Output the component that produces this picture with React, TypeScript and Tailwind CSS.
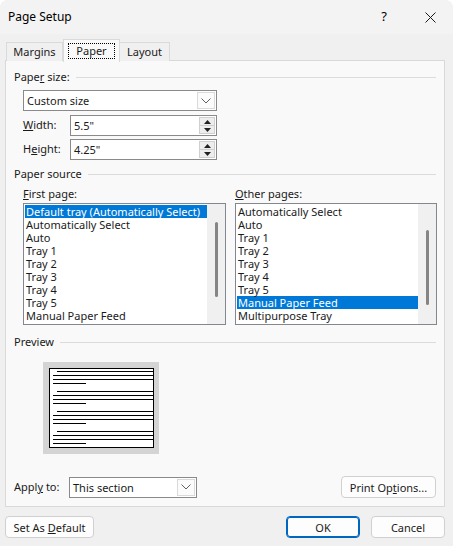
import React from 'react';

const firstPage = [
  'Default tray (Automatically Select)',
  'Automatically Select',
  'Auto',
  'Tray 1',
  'Tray 2',
  'Tray 3',
  'Tray 4',
  'Tray 5',
  'Manual Paper Feed',
];

const otherPages = [
  'Automatically Select',
  'Auto',
  'Tray 1',
  'Tray 2',
  'Tray 3',
  'Tray 4',
  'Tray 5',
  'Manual Paper Feed',
  'Multipurpose Tray',
];

function GroupHeader({ children }: { children: React.ReactNode }) {
  return (
    <div className="flex items-center h-[14px] pl-[8px] pr-[8px]">
      <span className="leading-[14px] whitespace-nowrap">{children}</span>
      <div className="flex-1 h-px bg-[#dcdcdc] ml-[6px]" />
    </div>
  );
}

function Chevron() {
  return (
    <svg width="10" height="6" viewBox="0 0 10 6" fill="none">
      <path d="M0.5 0.5 L5 5 L9.5 0.5" stroke="#606060" strokeWidth="1" />
    </svg>
  );
}

function Dropdown({ value, width }: { value: string; width: string }) {
  return (
    <div className={`flex h-[21px] ${width} border border-[#8a8a8a] bg-white`}>
      <div className="flex-1 pl-[3px] leading-[19px]">{value}</div>
      <div className="w-[18px] my-px mr-px border border-[#dadada] bg-[#fbfbfb] flex items-center justify-center">
        <Chevron />
      </div>
    </div>
  );
}

function Spinner() {
  return (
    <div className="w-[16px] my-px mr-px flex flex-col border border-[#cfcfcf] bg-[#ededed]">
      <div className="flex-1 flex items-center justify-center border-b border-[#cfcfcf]">
        <svg width="7" height="4" viewBox="0 0 7 4"><path d="M0 4 L3.5 0 L7 4 Z" fill="#202020" /></svg>
      </div>
      <div className="flex-1 flex items-center justify-center">
        <svg width="7" height="4" viewBox="0 0 7 4"><path d="M0 0 L3.5 4 L7 0 Z" fill="#202020" /></svg>
      </div>
    </div>
  );
}

function SpinField({ label, value }: { label: React.ReactNode; value: string }) {
  return (
    <div className="flex items-center h-[21px]">
      <div className="w-[47px]">{label}</div>
      <div className="flex h-[21px] w-[147px] border border-[#8a8a8a] bg-white">
        <div className="flex-1 pl-[3px] leading-[19px]">{value}</div>
        <Spinner />
      </div>
    </div>
  );
}

function ListBox({
  items,
  selected,
  thumbTop,
  thumbHeight,
  width,
}: {
  items: string[];
  selected: number;
  thumbTop: string;
  thumbHeight: string;
  width: string;
}) {
  return (
    <div className={`flex h-[122px] ${width} border border-[#828790] bg-white`}>
      <div className="flex-1 pt-px pl-px overflow-hidden">
        {items.map((it, i) => (
          <div
            key={it}
            className={`h-[13px] leading-[13px] pl-px whitespace-nowrap ${
              i === selected ? 'bg-[#0078d7] text-white' : ''
            }`}
          >
            {it}
          </div>
        ))}
      </div>
      <div className="w-[18px] bg-[#f0f0f0] flex justify-center">
        <div className={`w-[3px] rounded-full bg-[#858585] ${thumbTop} ${thumbHeight}`} />
      </div>
    </div>
  );
}

function PreviewPage() {
  const groups = [0, 20, 40, 60];
  return (
    <svg width="116" height="92" viewBox="0 0 116 92">
      <rect x="0" y="0" width="116" height="92" fill="#d4d4d4" />
      <rect x="6.5" y="6.5" width="104" height="79" fill="#ffffff" stroke="#000" strokeWidth="1" />
      {groups.map((g) => (
        <g key={g} stroke="#000" strokeWidth="1">
          <line x1="14" y1={9.5 + g} x2="110" y2={9.5 + g} />
          <line x1="10" y1={13.5 + g} x2="110" y2={13.5 + g} />
          <line x1="10" y1={17.5 + g} x2="110" y2={17.5 + g} />
          <line x1="10" y1={21.5 + g} x2="43" y2={21.5 + g} />
        </g>
      ))}
    </svg>
  );
}

function Button({
  children,
  width,
  primary = false,
}: {
  children: React.ReactNode;
  width: string;
  primary?: boolean;
}) {
  return (
    <div
      className={`h-[22px] ${width} rounded-[4px] bg-[#fdfdfd] flex items-center justify-center ${
        primary ? 'border border-[#0067c0] shadow-[inset_0_0_0_1px_#0067c0]' : 'border border-[#d0d0d0]'
      }`}
    >
      <span className="whitespace-pre leading-none">{children}</span>
    </div>
  );
}

export default function App() {
  return (
    <div
      className="w-[453px] h-[546px] bg-[#f0f0f0] text-[#1a1a1a] text-[11px] flex flex-col overflow-hidden rounded-t-[8px]"
      style={{ fontFamily: '"Noto Sans", "Liberation Sans", sans-serif' }}
    >
      {/* Title bar */}
      <div className="h-[34px] flex items-center bg-[#f3f3f3] shrink-0">
        <span className="pl-[8px] text-[12px] flex-1 text-black">Page Setup</span>
        <span className="w-[46px] text-center text-[13px] text-black">?</span>
        <span className="w-[46px] flex items-center justify-center">
          <svg width="11" height="11" viewBox="0 0 11 11">
            <path d="M0.5 0.5 L10.5 10.5 M10.5 0.5 L0.5 10.5" stroke="#1a1a1a" strokeWidth="1" />
          </svg>
        </span>
      </div>

      {/* Tabs */}
      <div className="h-[26px] flex items-end pl-[6px] shrink-0 relative z-10">
        <div className="h-[19px] w-[57px] mb-[-1px] border border-[#dadada] border-b-0 bg-[#f0f0f0] flex items-center justify-center">
          Margins
        </div>
        <div className="h-[23px] w-[57px] mb-[-2px] border border-[#dadada] border-b-0 bg-[#f9f9f9] flex items-start justify-center pt-[3px]">
          <span className="w-[47px] h-[16px] border border-dotted border-black flex items-center justify-center">
            Paper
          </span>
        </div>
        <div className="h-[19px] w-[50px] mb-[-1px] border border-[#dadada] border-b-0 border-l-0 bg-[#f0f0f0] flex items-center justify-center">
          Layout
        </div>
      </div>

      {/* Panel */}
      <div className="mx-[5px] w-[440px] h-[447px] border border-[#d9d9d9] bg-[#f9f9f9] flex flex-col shrink-0">
        <div className="mt-[9px]">
          <GroupHeader>
            Pape<u>r</u> size:
          </GroupHeader>
        </div>
        <div className="pl-[17px] mt-[6px] flex flex-col gap-[3px]">
          <Dropdown value="Custom size" width="w-[194px]" />
          <div className="mt-px">
            <SpinField label={<><u>W</u>idth:</>} value={'5.5"'} />
          </div>
          <SpinField label={<>H<u>e</u>ight:</>} value={'4.25"'} />
        </div>

        <div className="mt-[7px]">
          <GroupHeader>Paper source</GroupHeader>
        </div>
        <div className="flex pl-[17px] mt-[6px] gap-[9px]">
          <div className="flex flex-col gap-[2px]">
            <div className="h-[14px] leading-[14px]">
              <u>F</u>irst page:
            </div>
            <ListBox items={firstPage} selected={0} thumbTop="mt-[18px]" thumbHeight="h-[75px]" width="w-[203px]" />
          </div>
          <div className="flex flex-col gap-[2px]">
            <div className="h-[14px] leading-[14px]">
              <u>O</u>ther pages:
            </div>
            <ListBox items={otherPages} selected={7} thumbTop="mt-[26px]" thumbHeight="h-[75px]" width="w-[202px]" />
          </div>
        </div>

        <div className="mt-[10px]">
          <GroupHeader>Preview</GroupHeader>
        </div>
        <div className="pl-[37px] mt-[13px]">
          <PreviewPage />
        </div>

        <div className="flex items-center pl-[8px] pr-[8px] mt-[22px]">
          <div className="w-[55px]">
            Appl<u>y</u> to:
          </div>
          <Dropdown value="This section" width="w-[128px]" />
          <div className="flex-1" />
          <Button width="w-[95px]">
            Print Op<u>t</u>ions...
          </Button>
        </div>
      </div>

      {/* Bottom buttons */}
      <div className="flex items-center pl-[5px] pr-[8px] mt-[9px]">
        <Button width="w-[89px]">
          Set As <u>D</u>efault
        </Button>
        <div className="flex-1" />
        <Button width="w-[74px]" primary>
          OK
        </Button>
        <div className="w-[11px]" />
        <Button width="w-[74px]">Cancel</Button>
      </div>
    </div>
  );
}
